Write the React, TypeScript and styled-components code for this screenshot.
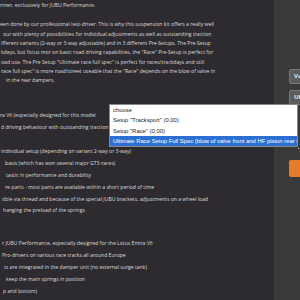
import React from "react";
import styled, { createGlobalStyle } from "styled-components";

const Global = createGlobalStyle`
  html, body { margin: 0; padding: 0; background: #2d2b2f; }
  body { width: 300px; height: 300px; overflow: hidden; }
`;

const Page = styled.div`
  position: relative;
  display: flex;
  width: 300px;
  height: 300px;
  overflow: hidden;
  background: #2d2b2f;
`;

const Main = styled.div`
  width: 274px;
  flex: none;
  padding-top: 1px;
  overflow: hidden;
  white-space: nowrap;
  color: #dedcda;
  font-family: "Open Sans", "Noto Sans", sans-serif;
  font-size: 5.12px;
`;

const Para = styled.div<{ $mt?: number; $lh: number }>`
  margin-top: ${(p) => p.$mt ?? 0}px;
  line-height: ${(p) => p.$lh}px;
`;

const Line = styled.div<{ $indent?: number }>`
  padding-left: ${(p) => p.$indent ?? 0}px;
`;

const Side = styled.div`
  flex: 1;
  background: #3a3a3b;
  padding: 69px 0 0 15px;
  display: flex;
  flex-direction: column;
  align-items: flex-start;
  overflow: hidden;
`;

const GrayButton = styled.div<{ $mt?: number }>`
  margin-top: ${(p) => p.$mt ?? 0}px;
  width: 40px;
  height: 15px;
  box-sizing: border-box;
  border: 1px solid #777777;
  border-radius: 2px;
  background: #5c5c5c;
  color: #e6e6e6;
  font-family: "Open Sans", sans-serif;
  font-weight: 700;
  font-size: 6px;
  line-height: 13px;
  padding-left: 4px;
  white-space: nowrap;
`;

const Dot = styled.div`
  margin: 43px 0 0 9px;
  width: 1px;
  height: 1px;
  background: #d0d0d0;
`;

const OrangeButton = styled.div`
  margin-top: 11px;
  width: 40px;
  height: 17px;
  border-radius: 2px;
  background: #e87a2b;
`;

const Dropdown = styled.ul`
  position: absolute;
  left: 109px;
  top: 104px;
  width: 189px;
  margin: 0;
  padding: 0;
  list-style: none;
  background: #ffffff;
  border: 1px solid #8a8a8a;
  box-sizing: border-box;
  font-family: "Liberation Sans", Arial, sans-serif;
  font-size: 5.9px;
  color: #1c1c1c;
  overflow: hidden;
`;

const Option = styled.li<{ $active?: boolean }>`
  height: 10.25px;
  line-height: 10.25px;
  padding-left: 3px;
  white-space: nowrap;
  background: ${(p) => (p.$active ? "#2b6fd3" : "transparent")};
  color: ${(p) => (p.$active ? "#ffffff" : "#1c1c1c")};
`;

export default function App() {
  return (
    <>
      <Global />
      <Page>
        <Main>
          <Para $lh={9.35}>
            <Line>rtner, exclusively for JUBU Performance.</Line>
          </Para>
          <Para $mt={10} $lh={9.35}>
            <Line>een done by our professional test-driver. This is why this suspension kit offers a really well</Line>
            <Line $indent={3}>our with plenty of possibilities for individual adjustments as well as outstanding traction</Line>
            <Line $indent={1}>ifferent variants (2-way or 3-way adjustable) and in 3 different Pre-Setups. The Pre-Setup</Line>
            <Line $indent={1}>kdays, but focus mor on basic road driving capabilities, the "Race" Pre-Setup is perfect for</Line>
            <Line $indent={1}>oad use. The Pre Setup "Ultimate race full spec" is perfect for races/trackdays and still</Line>
            <Line $indent={1}>race full spec" is more road/street useable that the "Race" depends on the blow of valve in</Line>
            <Line $indent={6}>in the rear dampers.</Line>
          </Para>
          <Para $mt={24.5} $lh={11.8}>
            <Line $indent={0}>ra V6 (especially designed for this model</Line>
            <Line $indent={1}>d driving behaviour with outstanding traction</Line>
          </Para>
          <Para $mt={12.5} $lh={11.8}>
            <Line $indent={1}>individual setup (depending on variant 2-way or 3-way)</Line>
            <Line $indent={5}>basis (which has won several major GT3-races)</Line>
            <Line $indent={6}>tastic in performance and durability</Line>
            <Line $indent={5}>re parts - most parts are available within a short period of time</Line>
            <Line $indent={2}>tible via thread and because of the special JUBU brackets, adjustments on a wheel load</Line>
            <Line $indent={3}>hanging the preload of the springs</Line>
          </Para>
          <Para $mt={21.2} $lh={11.8}>
            <Line $indent={2}>r JUBU Performance, especially designed for the Lotus Emira V6</Line>
            <Line $indent={2}>Pro-drivers on various race tracks all around Europe</Line>
            <Line $indent={4}>ts are integrated in the damper unit (no external surge tank)</Line>
            <Line $indent={6}>keep the main springs in position</Line>
            <Line $indent={3}>p and bottom)</Line>
          </Para>
        </Main>
        <Side>
          <GrayButton>Variante</GrayButton>
          <GrayButton $mt={6}>Ultimate</GrayButton>
          <Dot />
          <OrangeButton />
        </Side>
        <Dropdown>
          <Option>choose</Option>
          <Option>Setup "Tracksport" (0,00)</Option>
          <Option>Setup "Race" (0,00)</Option>
          <Option $active>Ultimate Race Setup Full Spec (blow of valve front and HF piston rear shock)</Option>
        </Dropdown>
      </Page>
    </>
  );
}
